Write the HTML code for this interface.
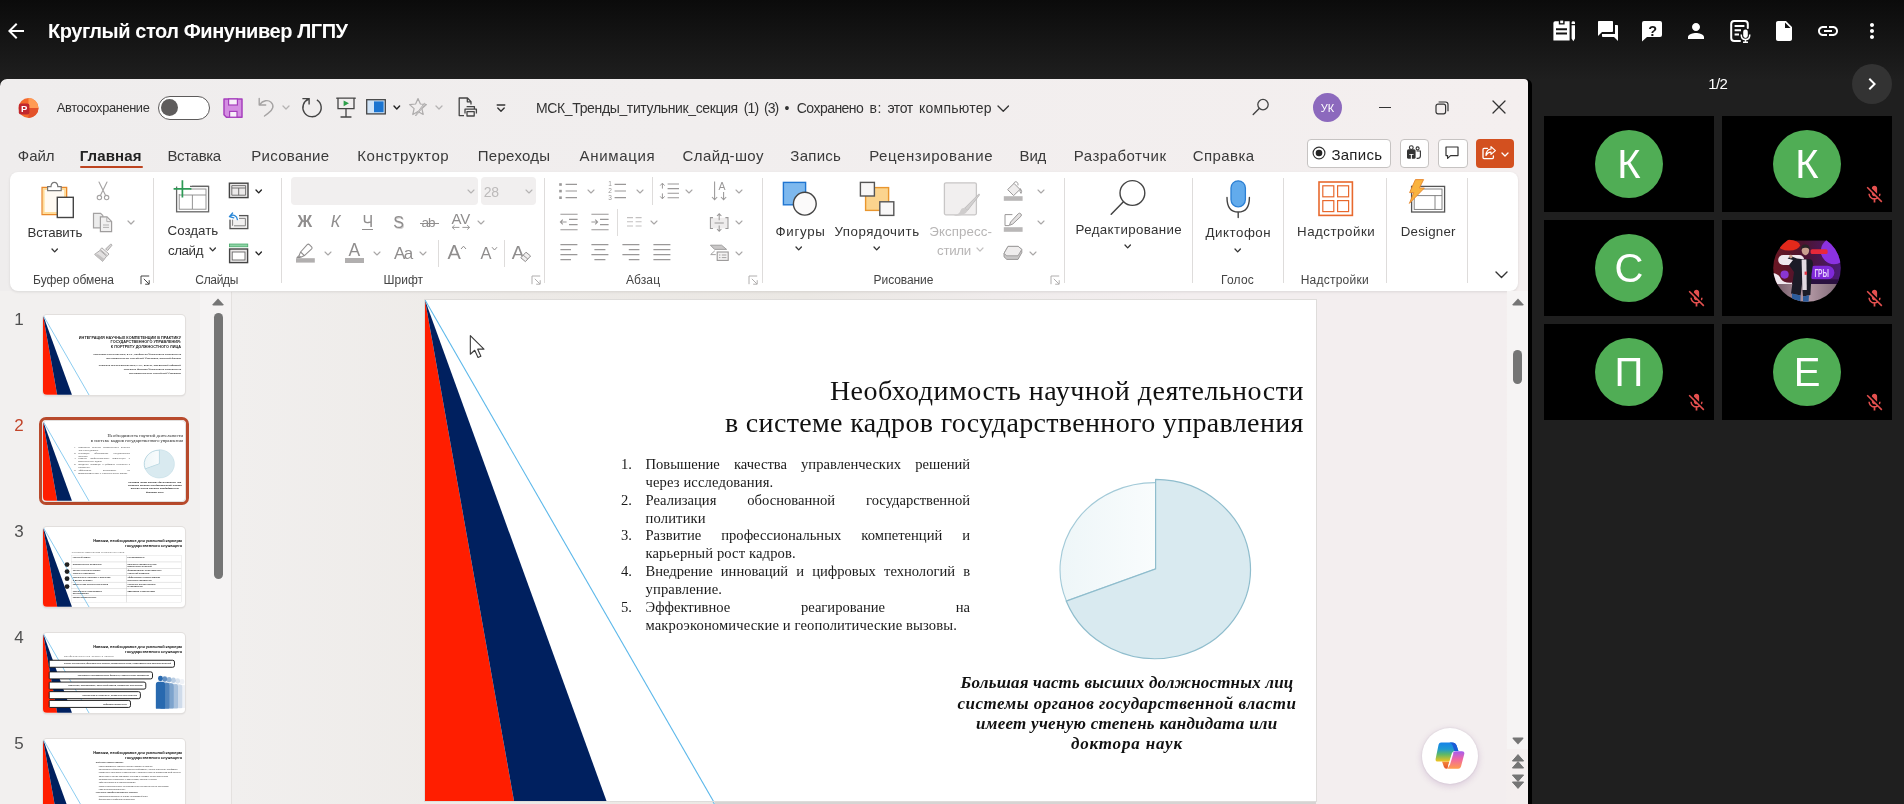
<!DOCTYPE html>
<html lang="ru"><head><meta charset="utf-8"><title>Круглый стол Финунивер ЛГПУ</title>
<style>
html,body{margin:0;padding:0}
body{width:1904px;height:804px;overflow:hidden;background:#1f1f1f;position:relative;font-family:"Liberation Sans",sans-serif}
#root{position:absolute;left:0;top:0;width:1904px;height:804px;will-change:transform}
.a{position:absolute}
.t{position:absolute;white-space:pre}
svg{position:absolute;overflow:visible}
</style></head><body><div id="root">
<div class="a" style="left:0;top:0;width:1904px;height:80px;background:linear-gradient(#0b0b0b,#1f1f1f)"></div>
<div class="a" style="left:0px;top:78.6px;width:1532px;height:726px;background:#000;border-radius:6px 6px 0 0;"></div>
<div class="a" style="left:0px;top:78.6px;width:1528px;height:726px;background:linear-gradient(90deg,#efeded 0,#f1eeee 45%,#f4efef 100%);border-radius:7px 4px 0 0;"></div>
<div class="a" style="left:232px;top:291px;width:1274px;height:513px;background:linear-gradient(90deg,#f1efee 0,#edeae7 22%,#ebe8e4 45%,#f0ecec 60%,#f3eeef 75%)"></div>
<div class="a" style="left:0px;top:291px;width:231px;height:513px;background:#f2f0ef;"></div>
<div class="a" style="left:200px;top:291px;width:31px;height:513px;background:#f5f3f3;"></div>
<div class="a" style="left:231px;top:292px;width:1px;height:512px;background:#e4e1df;"></div>
<div class="a" style="left:715px;top:801.3px;width:601px;height:2.7px;background:#d6d4d3;"></div>
<svg width="8" height="5" viewBox="0 0 8 5" style="left:710px;top:800.5px"><line x1="2.6" y1="0" x2="5.2" y2="4.5" stroke="#6fc0ec" stroke-width="1.1"/></svg>
<div class="a" style="left:424.8px;top:299.5px;width:891.2px;height:501px;background:#fff;box-shadow:0 0 0 1px #dedcda"></div><div class="a" style="left:425px;top:300px;width:891px;height:500.5px;overflow:hidden"><svg width="891" height="501" viewBox="0 0 891 501" style="left:0;top:0"><polygon points="0,0 0,501 89,501" fill="#ff1e00"/><polygon points="0,0 89,501 181.5,501" fill="#00205f"/><line x1="0" y1="0" x2="290" y2="504" stroke="#5cb8ea" stroke-width="1.1"/></svg><span class="t" style="left:404.90px;top:76.50px;font:28px/28px 'Liberation Serif',serif;color:#111;letter-spacing:0.489px;">Необходимость научной деятельности</span><span class="t" style="left:299.90px;top:108.50px;font:28px/28px 'Liberation Serif',serif;color:#111;letter-spacing:0.342px;">в системе кадров государственного управления</span><span class="t" style="left:196.00px;top:156.70px;font:14.6px/14.6px 'Liberation Serif',serif;color:#1a1a1a;">1.</span><div class="a" style="left:220.5px;top:156.70px;width:324.6px;font:14.6px/14.6px 'Liberation Serif',serif;color:#1a1a1a;text-align:justify;text-align-last:justify;white-space:normal">Повышение качества управленческих решений</div><span class="t" style="left:220.50px;top:174.70px;font:14.6px/14.6px 'Liberation Serif',serif;color:#1a1a1a;letter-spacing:0.125px;">через исследования.</span><span class="t" style="left:196.00px;top:192.70px;font:14.6px/14.6px 'Liberation Serif',serif;color:#1a1a1a;">2.</span><div class="a" style="left:220.5px;top:192.70px;width:324.6px;font:14.6px/14.6px 'Liberation Serif',serif;color:#1a1a1a;text-align:justify;text-align-last:justify;white-space:normal">Реализация обоснованной государственной</div><span class="t" style="left:220.50px;top:210.70px;font:14.6px/14.6px 'Liberation Serif',serif;color:#1a1a1a;letter-spacing:0.152px;">политики</span><span class="t" style="left:196.00px;top:227.70px;font:14.6px/14.6px 'Liberation Serif',serif;color:#1a1a1a;">3.</span><div class="a" style="left:220.5px;top:227.70px;width:324.6px;font:14.6px/14.6px 'Liberation Serif',serif;color:#1a1a1a;text-align:justify;text-align-last:justify;white-space:normal">Развитие профессиональных компетенций и</div><span class="t" style="left:220.50px;top:245.70px;font:14.6px/14.6px 'Liberation Serif',serif;color:#1a1a1a;letter-spacing:0.126px;">карьерный рост кадров.</span><span class="t" style="left:196.00px;top:263.70px;font:14.6px/14.6px 'Liberation Serif',serif;color:#1a1a1a;">4.</span><div class="a" style="left:220.5px;top:263.70px;width:324.6px;font:14.6px/14.6px 'Liberation Serif',serif;color:#1a1a1a;text-align:justify;text-align-last:justify;white-space:normal">Внедрение инноваций и цифровых технологий в</div><span class="t" style="left:220.50px;top:281.70px;font:14.6px/14.6px 'Liberation Serif',serif;color:#1a1a1a;letter-spacing:0.135px;">управление.</span><span class="t" style="left:196.00px;top:299.70px;font:14.6px/14.6px 'Liberation Serif',serif;color:#1a1a1a;">5.</span><div class="a" style="left:220.5px;top:299.70px;width:324.6px;font:14.6px/14.6px 'Liberation Serif',serif;color:#1a1a1a;text-align:justify;text-align-last:justify;white-space:normal">Эффективное реагирование на</div><span class="t" style="left:220.50px;top:317.70px;font:14.6px/14.6px 'Liberation Serif',serif;color:#1a1a1a;letter-spacing:0.128px;">макроэкономические и геополитические вызовы.</span><svg width="891" height="501" viewBox="0 0 891 501" style="left:0;top:0"><defs><linearGradient id="pg" x1="0" y1="0" x2="1" y2="0"><stop offset="0" stop-color="#eef6f8"/><stop offset="1" stop-color="#f9fcfd"/></linearGradient></defs><path d="M730.6,268.9 L641.4,301.0 A94.6,87 0 0 1 730.6,182.6 Z" fill="url(#pg)" stroke="#a3cad8" stroke-width="1.1" stroke-linejoin="round"/><path d="M730.6,179.4 A95.3,89.6 0 1 1 641.2,301.1 L730.6,268.9 Z" fill="#d9eaf0" stroke="#8fbdcd" stroke-width="1.2" stroke-linejoin="round"/></svg><span class="t" style="left:535.60px;top:374.00px;font:italic bold 17px/17px 'Liberation Serif',serif;color:#111;letter-spacing:0.183px;">Большая часть высших должностных лиц</span><span class="t" style="left:532.60px;top:395.00px;font:italic bold 17px/17px 'Liberation Serif',serif;color:#111;letter-spacing:0.471px;">системы органов государственной власти</span><span class="t" style="left:551.00px;top:415.00px;font:italic bold 17px/17px 'Liberation Serif',serif;color:#111;letter-spacing:0.276px;">имеет ученую степень кандидата или</span><span class="t" style="left:646.00px;top:435.00px;font:italic bold 17px/17px 'Liberation Serif',serif;color:#111;letter-spacing:0.823px;">доктора наук</span></div>
<span class="t" style="left:14.27px;top:311.00px;font:17px/17px 'Liberation Sans',sans-serif;color:#505050;">1</span>
<div class="a" style="left:43px;top:315px;width:142px;height:80px;background:#fff;overflow:hidden;border-radius:4px;box-shadow:0 0 0 1px #e2dfdd,0 1px 2px rgba(0,0,0,.15)"><div class="a" style="left:0;top:0;width:891px;height:501px;transform:scale(0.15937);transform-origin:0 0"><svg width="891" height="501" viewBox="0 0 891 501" style="left:0;top:0"><polygon points="0,0 0,501 89,501" fill="#ff1e00"/><polygon points="0,0 89,501 181.5,501" fill="#00205f"/><line x1="0" y1="0" x2="290" y2="504" stroke="#5cb8ea" stroke-width="4.5"/></svg><span class="t" style="left:225.07px;top:129.50px;font:bold 24px/24px 'Liberation Sans',sans-serif;color:#222;">ИНТЕГРАЦИЯ НАУЧНЫХ КОМПЕТЕНЦИЙ В ПРАКТИКУ</span><span class="t" style="left:423.96px;top:157.50px;font:bold 24px/24px 'Liberation Sans',sans-serif;color:#222;">ГОСУДАРСТВЕННОГО УПРАВЛЕНИЯ:</span><span class="t" style="left:425.47px;top:185.50px;font:bold 24px/24px 'Liberation Sans',sans-serif;color:#222;">К ПОРТРЕТУ ДОЛЖНОСТНОГО ЛИЦА</span><span class="t" style="left:315.97px;top:237.00px;font:bold 15px/15px 'Liberation Sans',sans-serif;color:#333;">Смыслова Ольга Юрьевна, д.э.н., профессор Финансового университета</span><span class="t" style="left:396.10px;top:263.00px;font:bold 15px/15px 'Liberation Sans',sans-serif;color:#333;">при Правительстве Российской Федерации, Липецкий филиал</span><span class="t" style="left:350.28px;top:309.00px;font:bold 15px/15px 'Liberation Sans',sans-serif;color:#333;">Корякина Татьяна Валерьевна, к.э.н., доцент, заведующий кафедрой</span><span class="t" style="left:506.85px;top:333.00px;font:bold 15px/15px 'Liberation Sans',sans-serif;color:#333;">Липецкого филиала Финансового университета</span><span class="t" style="left:539.89px;top:357.00px;font:bold 15px/15px 'Liberation Sans',sans-serif;color:#333;">при Правительстве Российской Федерации</span></div></div>
<span class="t" style="left:14.27px;top:417.00px;font:17px/17px 'Liberation Sans',sans-serif;color:#c2452a;">2</span>
<div class="a" style="left:39px;top:417px;width:144px;height:82px;border:3px solid #b84a2c;border-radius:7px;background:#fff"></div>
<div class="a" style="left:43px;top:421px;width:142px;height:80px;background:#fff;overflow:hidden;border-radius:4px;box-shadow:0 0 0 1px #e2dfdd,0 1px 2px rgba(0,0,0,.15)"><div class="a" style="left:0;top:0;width:891px;height:501px;transform:scale(0.15937);transform-origin:0 0"><svg width="891" height="501" viewBox="0 0 891 501" style="left:0;top:0"><polygon points="0,0 0,501 89,501" fill="#ff1e00"/><polygon points="0,0 89,501 181.5,501" fill="#00205f"/><line x1="0" y1="0" x2="290" y2="504" stroke="#5cb8ea" stroke-width="4.5"/></svg><span class="t" style="left:404.90px;top:76.50px;font:28px/28px 'Liberation Serif',serif;color:#111;letter-spacing:0.489px;">Необходимость научной деятельности</span><span class="t" style="left:299.90px;top:108.50px;font:28px/28px 'Liberation Serif',serif;color:#111;letter-spacing:0.342px;">в системе кадров государственного управления</span><span class="t" style="left:196.00px;top:156.70px;font:14.6px/14.6px 'Liberation Serif',serif;color:#1a1a1a;">1.</span><div class="a" style="left:220.5px;top:156.70px;width:324.6px;font:14.6px/14.6px 'Liberation Serif',serif;color:#1a1a1a;text-align:justify;text-align-last:justify;white-space:normal">Повышение качества управленческих решений</div><span class="t" style="left:220.50px;top:174.70px;font:14.6px/14.6px 'Liberation Serif',serif;color:#1a1a1a;letter-spacing:0.125px;">через исследования.</span><span class="t" style="left:196.00px;top:192.70px;font:14.6px/14.6px 'Liberation Serif',serif;color:#1a1a1a;">2.</span><div class="a" style="left:220.5px;top:192.70px;width:324.6px;font:14.6px/14.6px 'Liberation Serif',serif;color:#1a1a1a;text-align:justify;text-align-last:justify;white-space:normal">Реализация обоснованной государственной</div><span class="t" style="left:220.50px;top:210.70px;font:14.6px/14.6px 'Liberation Serif',serif;color:#1a1a1a;letter-spacing:0.152px;">политики</span><span class="t" style="left:196.00px;top:227.70px;font:14.6px/14.6px 'Liberation Serif',serif;color:#1a1a1a;">3.</span><div class="a" style="left:220.5px;top:227.70px;width:324.6px;font:14.6px/14.6px 'Liberation Serif',serif;color:#1a1a1a;text-align:justify;text-align-last:justify;white-space:normal">Развитие профессиональных компетенций и</div><span class="t" style="left:220.50px;top:245.70px;font:14.6px/14.6px 'Liberation Serif',serif;color:#1a1a1a;letter-spacing:0.126px;">карьерный рост кадров.</span><span class="t" style="left:196.00px;top:263.70px;font:14.6px/14.6px 'Liberation Serif',serif;color:#1a1a1a;">4.</span><div class="a" style="left:220.5px;top:263.70px;width:324.6px;font:14.6px/14.6px 'Liberation Serif',serif;color:#1a1a1a;text-align:justify;text-align-last:justify;white-space:normal">Внедрение инноваций и цифровых технологий в</div><span class="t" style="left:220.50px;top:281.70px;font:14.6px/14.6px 'Liberation Serif',serif;color:#1a1a1a;letter-spacing:0.135px;">управление.</span><span class="t" style="left:196.00px;top:299.70px;font:14.6px/14.6px 'Liberation Serif',serif;color:#1a1a1a;">5.</span><div class="a" style="left:220.5px;top:299.70px;width:324.6px;font:14.6px/14.6px 'Liberation Serif',serif;color:#1a1a1a;text-align:justify;text-align-last:justify;white-space:normal">Эффективное реагирование на</div><span class="t" style="left:220.50px;top:317.70px;font:14.6px/14.6px 'Liberation Serif',serif;color:#1a1a1a;letter-spacing:0.128px;">макроэкономические и геополитические вызовы.</span><svg width="891" height="501" viewBox="0 0 891 501" style="left:0;top:0"><defs><linearGradient id="pg" x1="0" y1="0" x2="1" y2="0"><stop offset="0" stop-color="#eef6f8"/><stop offset="1" stop-color="#f9fcfd"/></linearGradient></defs><path d="M730.6,268.9 L641.4,301.0 A94.6,87 0 0 1 730.6,182.6 Z" fill="url(#pg)" stroke="#a3cad8" stroke-width="4.5" stroke-linejoin="round"/><path d="M730.6,179.4 A95.3,89.6 0 1 1 641.2,301.1 L730.6,268.9 Z" fill="#d9eaf0" stroke="#8fbdcd" stroke-width="1.2" stroke-linejoin="round"/></svg><span class="t" style="left:535.60px;top:374.00px;font:italic bold 17px/17px 'Liberation Serif',serif;color:#111;letter-spacing:0.183px;">Большая часть высших должностных лиц</span><span class="t" style="left:532.60px;top:395.00px;font:italic bold 17px/17px 'Liberation Serif',serif;color:#111;letter-spacing:0.471px;">системы органов государственной власти</span><span class="t" style="left:551.00px;top:415.00px;font:italic bold 17px/17px 'Liberation Serif',serif;color:#111;letter-spacing:0.276px;">имеет ученую степень кандидата или</span><span class="t" style="left:646.00px;top:435.00px;font:italic bold 17px/17px 'Liberation Serif',serif;color:#111;letter-spacing:0.823px;">доктора наук</span></div></div>
<span class="t" style="left:14.27px;top:523.00px;font:17px/17px 'Liberation Sans',sans-serif;color:#505050;">3</span>
<div class="a" style="left:43px;top:527px;width:142px;height:80px;background:#fff;overflow:hidden;border-radius:4px;box-shadow:0 0 0 1px #e2dfdd,0 1px 2px rgba(0,0,0,.15)"><div class="a" style="left:0;top:0;width:891px;height:501px;transform:scale(0.15937);transform-origin:0 0"><svg width="891" height="501" viewBox="0 0 891 501" style="left:0;top:0"><polygon points="0,0 0,501 89,501" fill="#ff1e00"/><polygon points="0,0 89,501 181.5,501" fill="#00205f"/><line x1="0" y1="0" x2="290" y2="504" stroke="#5cb8ea" stroke-width="4.5"/></svg><span class="t" style="left:315.00px;top:72.50px;font:bold 25px/25px 'Liberation Sans',sans-serif;color:#111;letter-spacing:-0.571px;">Навыки, необходимые для успешной карьеры</span><span class="t" style="left:515.00px;top:102.50px;font:bold 25px/25px 'Liberation Sans',sans-serif;color:#111;letter-spacing:-0.323px;">государственного служащего</span><span class="t" style="left:180.00px;top:154.00px;font:14px/14px 'Liberation Sans',sans-serif;color:#444;letter-spacing:1.227px;">Ключевые компетенции должностного лица</span><div class="a" style="left:178px;top:177px;width:689px;height:43px;border:1.5px solid #aaa;box-sizing:border-box"></div><div class="a" style="left:521px;top:177px;width:1.5px;height:43px;background:#aaa"></div><span class="t" style="left:186px;top:182px;font:bold 14px/16px 'Liberation Sans',sans-serif;color:#333">Научный навык</span><span class="t" style="left:530px;top:182px;font:bold 14px/16px 'Liberation Sans',sans-serif;color:#333">Необходимость</span><div class="a" style="left:178px;top:219px;width:689px;height:43px;border:1.5px solid #aaa;box-sizing:border-box"></div><div class="a" style="left:521px;top:219px;width:1.5px;height:43px;background:#aaa"></div><span class="t" style="left:186px;top:224px;font:bold 14px/16px 'Liberation Sans',sans-serif;color:#333">аналитическое мышление</span><span class="t" style="left:530px;top:224px;font:bold 14px/16px 'Liberation Sans',sans-serif;color:#333">принятие управленческих<br>взвешенных решений</span><div class="a" style="left:178px;top:261px;width:689px;height:43px;border:1.5px solid #aaa;box-sizing:border-box"></div><div class="a" style="left:521px;top:261px;width:1.5px;height:43px;background:#aaa"></div><span class="t" style="left:186px;top:266px;font:bold 14px/16px 'Liberation Sans',sans-serif;color:#333">умение системно решать<br>сложные проблемы</span><span class="t" style="left:530px;top:266px;font:bold 14px/16px 'Liberation Sans',sans-serif;color:#333">формирование обоснованных<br>стратегий развития</span><div class="a" style="left:178px;top:303px;width:689px;height:43px;border:1.5px solid #aaa;box-sizing:border-box"></div><div class="a" style="left:521px;top:303px;width:1.5px;height:43px;background:#aaa"></div><span class="t" style="left:186px;top:308px;font:bold 14px/16px 'Liberation Sans',sans-serif;color:#333">способность работать с данными<br>и делать выводы</span><span class="t" style="left:530px;top:308px;font:bold 14px/16px 'Liberation Sans',sans-serif;color:#333">эффективное использование<br>ресурсов управления</span><div class="a" style="left:178px;top:345px;width:689px;height:43px;border:1.5px solid #aaa;box-sizing:border-box"></div><div class="a" style="left:521px;top:345px;width:1.5px;height:43px;background:#aaa"></div><span class="t" style="left:186px;top:350px;font:bold 14px/16px 'Liberation Sans',sans-serif;color:#333">критическая оценка источников</span><span class="t" style="left:530px;top:350px;font:bold 14px/16px 'Liberation Sans',sans-serif;color:#333">снижение рисков ошибок<br>в управлении</span><div class="a" style="left:178px;top:387px;width:689px;height:43px;border:1.5px solid #aaa;box-sizing:border-box"></div><div class="a" style="left:521px;top:387px;width:1.5px;height:43px;background:#aaa"></div><span class="t" style="left:186px;top:392px;font:bold 14px/16px 'Liberation Sans',sans-serif;color:#333">способность планировать<br>исследования</span><span class="t" style="left:530px;top:392px;font:bold 14px/16px 'Liberation Sans',sans-serif;color:#333">адаптация к изменениям</span><div class="a" style="left:178px;top:429px;width:689px;height:43px;border:1.5px solid #aaa;box-sizing:border-box"></div><div class="a" style="left:521px;top:429px;width:1.5px;height:43px;background:#aaa"></div><span class="t" style="left:186px;top:434px;font:bold 14px/16px 'Liberation Sans',sans-serif;color:#333">коммуникабельность</span><span class="t" style="left:530px;top:434px;font:bold 14px/16px 'Liberation Sans',sans-serif;color:#333"></span><div class="a" style="left:136px;top:221px;width:30px;height:30px;border-radius:15px;background:#222"></div><div class="a" style="left:136px;top:265px;width:30px;height:30px;border-radius:15px;background:#222"></div><div class="a" style="left:136px;top:309px;width:30px;height:30px;border-radius:15px;background:#222"></div><div class="a" style="left:136px;top:359px;width:30px;height:30px;border-radius:15px;background:#222"></div></div></div>
<span class="t" style="left:14.27px;top:629.00px;font:17px/17px 'Liberation Sans',sans-serif;color:#505050;">4</span>
<div class="a" style="left:43px;top:633px;width:142px;height:80px;background:#fff;overflow:hidden;border-radius:4px;box-shadow:0 0 0 1px #e2dfdd,0 1px 2px rgba(0,0,0,.15)"><div class="a" style="left:0;top:0;width:891px;height:501px;transform:scale(0.15937);transform-origin:0 0"><svg width="891" height="501" viewBox="0 0 891 501" style="left:0;top:0"><polygon points="0,0 0,501 89,501" fill="#ff1e00"/><polygon points="0,0 89,501 181.5,501" fill="#00205f"/><line x1="0" y1="0" x2="290" y2="504" stroke="#5cb8ea" stroke-width="4.5"/></svg><span class="t" style="left:315.00px;top:72.50px;font:bold 25px/25px 'Liberation Sans',sans-serif;color:#111;letter-spacing:-0.571px;">Навыки, необходимые для успешной карьеры</span><span class="t" style="left:515.00px;top:102.50px;font:bold 25px/25px 'Liberation Sans',sans-serif;color:#111;letter-spacing:-0.323px;">государственного служащего</span><span class="t" style="left:132.00px;top:141.00px;font:14px/14px 'Liberation Sans',sans-serif;color:#444;letter-spacing:2.173px;">Профессиональные знания и навыки</span><div class="a" style="left:36px;top:168px;width:792px;height:50px;border:6px solid #1a1a1a;border-radius:8px 14px 14px 8px;background:#fff;box-sizing:border-box"></div><span class="t" style="right:87px;top:185px;font:bold 13px/16px 'Liberation Sans',sans-serif;color:#333">Знание Конституции, федеральных законов, нормативных актов, необходимых для принятия решений</span><div class="a" style="left:36px;top:241px;width:654px;height:50px;border:6px solid #1a1a1a;border-radius:8px 14px 14px 8px;background:#fff;box-sizing:border-box"></div><span class="t" style="right:225px;top:258px;font:bold 13px/16px 'Liberation Sans',sans-serif;color:#333">Экономика и государственные финансы, стратегическое управление</span><div class="a" style="left:36px;top:305px;width:612px;height:50px;border:6px solid #1a1a1a;border-radius:8px 14px 14px 8px;background:#fff;box-sizing:border-box"></div><span class="t" style="right:267px;top:322px;font:bold 13px/16px 'Liberation Sans',sans-serif;color:#333">Лидерство, планирование, проектный подход, управление персоналом</span><div class="a" style="left:36px;top:365px;width:578px;height:50px;border:6px solid #1a1a1a;border-radius:8px 14px 14px 8px;background:#fff;box-sizing:border-box"></div><span class="t" style="right:301px;top:382px;font:bold 13px/16px 'Liberation Sans',sans-serif;color:#333">Письменная и устная речь, публичные выступления</span><div class="a" style="left:36px;top:420px;width:516px;height:50px;border:6px solid #1a1a1a;border-radius:8px 14px 14px 8px;background:#fff;box-sizing:border-box"></div><span class="t" style="right:363px;top:437px;font:bold 13px/16px 'Liberation Sans',sans-serif;color:#333">Цифровая грамотность</span><div class="a" style="left:857px;top:288px;width:30px;height:34px;border-radius:15px;background:rgba(190,205,225,0.25)"></div><div class="a" style="left:843px;top:326px;width:58px;height:145px;background:rgba(190,205,225,0.25);border-radius:18px 18px 6px 6px"></div><div class="a" style="left:830px;top:284px;width:30px;height:34px;border-radius:15px;background:rgba(160,185,215,0.40)"></div><div class="a" style="left:816px;top:322px;width:58px;height:150px;background:rgba(160,185,215,0.40);border-radius:18px 18px 6px 6px"></div><div class="a" style="left:803px;top:280px;width:30px;height:34px;border-radius:15px;background:rgba(130,165,205,0.55)"></div><div class="a" style="left:789px;top:318px;width:58px;height:155px;background:rgba(130,165,205,0.55);border-radius:18px 18px 6px 6px"></div><div class="a" style="left:776px;top:276px;width:30px;height:34px;border-radius:15px;background:rgba(100,145,195,0.70)"></div><div class="a" style="left:762px;top:314px;width:58px;height:160px;background:rgba(100,145,195,0.70);border-radius:18px 18px 6px 6px"></div><div class="a" style="left:749px;top:272px;width:30px;height:34px;border-radius:15px;background:rgba(70,125,185,0.85)"></div><div class="a" style="left:735px;top:310px;width:58px;height:165px;background:rgba(70,125,185,0.85);border-radius:18px 18px 6px 6px"></div><div class="a" style="left:722px;top:268px;width:30px;height:34px;border-radius:15px;background:rgba(40,105,175,1.00)"></div><div class="a" style="left:708px;top:306px;width:58px;height:170px;background:rgba(40,105,175,1.00);border-radius:18px 18px 6px 6px"></div></div></div>
<span class="t" style="left:14.27px;top:735.00px;font:17px/17px 'Liberation Sans',sans-serif;color:#505050;">5</span>
<div class="a" style="left:43px;top:739px;width:142px;height:80px;background:#fff;overflow:hidden;border-radius:4px;box-shadow:0 0 0 1px #e2dfdd,0 1px 2px rgba(0,0,0,.15)"><div class="a" style="left:0;top:0;width:891px;height:501px;transform:scale(0.15937);transform-origin:0 0"><svg width="891" height="501" viewBox="0 0 891 501" style="left:0;top:0"><polygon points="0,0 0,501 89,501" fill="#ff1e00"/><polygon points="0,0 89,501 181.5,501" fill="#00205f"/><line x1="0" y1="0" x2="290" y2="504" stroke="#5cb8ea" stroke-width="4.5"/></svg><span class="t" style="left:315.00px;top:72.50px;font:bold 25px/25px 'Liberation Sans',sans-serif;color:#111;letter-spacing:-0.571px;">Навыки, необходимые для успешной карьеры</span><span class="t" style="left:515.00px;top:102.50px;font:bold 25px/25px 'Liberation Sans',sans-serif;color:#111;letter-spacing:-0.323px;">государственного служащего</span><span class="t" style="left:331px;top:140px;font:bold 13px/15px 'Liberation Sans',sans-serif;color:#333">Soft Skills (гибкие навыки):</span><span class="t" style="left:350px;top:161px;font:13px/15px 'Liberation Sans',sans-serif;color:#333">коммуникативные навыки и умение работать в команде</span><span class="t" style="left:350px;top:182px;font:13px/15px 'Liberation Sans',sans-serif;color:#333">эмоциональный интеллект и стрессоустойчивость, умение разрешать конфликты</span><span class="t" style="left:350px;top:203px;font:13px/15px 'Liberation Sans',sans-serif;color:#333">критическое мышление и способность к самообучению на протяжении всей карьеры</span><span class="t" style="left:350px;top:224px;font:13px/15px 'Liberation Sans',sans-serif;color:#333">лидерство и умение принимать решения в условиях неопределенности</span><span class="t" style="left:350px;top:245px;font:13px/15px 'Liberation Sans',sans-serif;color:#333">адаптивность и готовность к изменениям, гибкость в работе</span><span class="t" style="left:350px;top:266px;font:13px/15px 'Liberation Sans',sans-serif;color:#333">тайм-менеджмент и самоорганизация</span><span class="t" style="left:350px;top:287px;font:13px/15px 'Liberation Sans',sans-serif;color:#333">этика и ответственность государственного служащего перед обществом</span><span class="t" style="left:350px;top:308px;font:13px/15px 'Liberation Sans',sans-serif;color:#333">клиентоориентированность</span><span class="t" style="left:331px;top:329px;font:bold 13px/15px 'Liberation Sans',sans-serif;color:#333">Hard Skills (профессиональные навыки):</span><span class="t" style="left:350px;top:350px;font:13px/15px 'Liberation Sans',sans-serif;color:#333">правовая грамотность и знание нормативной базы</span><span class="t" style="left:350px;top:371px;font:13px/15px 'Liberation Sans',sans-serif;color:#333">финансовая и цифровая грамотность</span></div></div>
<div class="a" style="left:213.5px;top:313px;width:9px;height:266px;background:#757575;border-radius:5px;"></div>
<svg width="12" height="8" viewBox="0 0 12 8" style="left:212px;top:298px"><path d="M6,0.5 L11.3,6.2 Q11.8,7.5 10.6,7.5 L1.4,7.5 Q0.2,7.5 0.7,6.2 Z" fill="#757575"/></svg>
<span class="t" style="left:1708.15px;top:76.00px;font:15px/15px 'Liberation Sans',sans-serif;color:#fff;letter-spacing:-0.576px;">1/2</span>
<div class="a" style="left:1852px;top:64px;width:40px;height:40px;border-radius:20px;background:#333"></div>
<svg width="24" height="24" viewBox="0 0 24 24" style="left:1860.0px;top:72.0px"><path d="M10 6L8.59 7.41 13.17 12l-4.58 4.59L10 18l6-6z" fill="#fff"/></svg>
<div class="a" style="left:1544px;top:116px;width:170px;height:96px;background:#000;"></div>
<div class="a" style="left:1595px;top:130px;width:68px;height:68px;border-radius:34px;background:#50ad55"></div>
<span class="t" style="left:1617.35px;top:144.00px;font:40px/40px 'Liberation Sans',sans-serif;color:#fff;">К</span>
<div class="a" style="left:1722px;top:116px;width:170px;height:96px;background:#000;"></div>
<div class="a" style="left:1773px;top:130px;width:68px;height:68px;border-radius:34px;background:#50ad55"></div>
<span class="t" style="left:1795.35px;top:144.00px;font:40px/40px 'Liberation Sans',sans-serif;color:#fff;">К</span>
<svg width="21" height="21" viewBox="0 0 24 24" style="left:1863.5px;top:183.5px"><path d="M19 11h-1.7c0 .74-.16 1.43-.43 2.05l1.23 1.23c.56-.98.9-2.09.9-3.28zm-4.02.17c0-.06.02-.11.02-.17V5c0-1.66-1.34-3-3-3S9 3.34 9 5v.18l5.98 5.99zM4.27 3L3 4.27l6.01 6.01V11c0 1.66 1.33 3 2.99 3 .22 0 .44-.03.65-.08l1.66 1.66c-.71.33-1.5.52-2.31.52-2.76 0-5.3-2.1-5.3-5.1H5c0 3.41 2.72 6.23 6 6.72V21h2v-3.28c.91-.13 1.77-.45 2.54-.9L19.73 21 21 19.73 4.27 3z" fill="#e5504f"/></svg>
<div class="a" style="left:1544px;top:220px;width:170px;height:96px;background:#000;"></div>
<div class="a" style="left:1595px;top:234px;width:68px;height:68px;border-radius:34px;background:#50ad55"></div>
<span class="t" style="left:1614.56px;top:248.00px;font:40px/40px 'Liberation Sans',sans-serif;color:#fff;">С</span>
<svg width="21" height="21" viewBox="0 0 24 24" style="left:1685.5px;top:287.5px"><path d="M19 11h-1.7c0 .74-.16 1.43-.43 2.05l1.23 1.23c.56-.98.9-2.09.9-3.28zm-4.02.17c0-.06.02-.11.02-.17V5c0-1.66-1.34-3-3-3S9 3.34 9 5v.18l5.98 5.99zM4.27 3L3 4.27l6.01 6.01V11c0 1.66 1.33 3 2.99 3 .22 0 .44-.03.65-.08l1.66 1.66c-.71.33-1.5.52-2.31.52-2.76 0-5.3-2.1-5.3-5.1H5c0 3.41 2.72 6.23 6 6.72V21h2v-3.28c.91-.13 1.77-.45 2.54-.9L19.73 21 21 19.73 4.27 3z" fill="#e5504f"/></svg>
<div class="a" style="left:1722px;top:220px;width:170px;height:96px;background:#000;"></div>
<svg width="68" height="68" viewBox="0 0 68 68" style="left:1773px;top:234.3px"><defs><clipPath id="avc"><circle cx="34" cy="34" r="33.8"/></clipPath><linearGradient id="avb" x1="0" y1="0" x2="1" y2="0"><stop offset="0" stop-color="#6a1622"/><stop offset="0.45" stop-color="#4c1430"/><stop offset="1" stop-color="#4a1a78"/></linearGradient><linearGradient id="avf" x1="0" y1="0" x2="1" y2="0"><stop offset="0" stop-color="#6e5562"/><stop offset="0.5" stop-color="#b59aa6"/><stop offset="1" stop-color="#7a6472"/></linearGradient></defs><g clip-path="url(#avc)"><rect width="68" height="68" fill="#000"/><rect y="6.6" width="68" height="44" fill="url(#avb)"/><ellipse cx="16" cy="11.2" rx="11" ry="5.4" fill="#e3291b"/><circle cx="61" cy="17" r="13.2" fill="#8b32e2"/><rect x="5.2" y="21" width="26" height="10" rx="5" fill="#efe7ee"/><path d="M0 39 Q6 40 8 45 Q10 49 19 48.6 V50 H0 Z" fill="#efe7ee"/><circle cx="11.6" cy="40.6" r="4.1" fill="#8a36d2"/><rect x="35" y="31.8" width="26.4" height="13.8" rx="6.9" fill="#7f29d8"/><rect x="37.6" y="15.2" width="17" height="4.9" rx="1.6" fill="#e8283a"/><rect x="30" y="45.4" width="38" height="4.6" fill="#2a1040"/><rect y="50" width="68" height="18" fill="url(#avf)"/><path d="M20 26 L14.6 24.6 L17.6 22 L24 24.4 L28 25 L37 25.2 Q40 26 40 30 L38.6 40 L37.4 61 L30 62.6 L29 50 L27.6 61.6 L18 59.6 L21 38 L16 31 Z" fill="#1b1b27"/><path d="M28.6 25.4 H33.4 L33.8 56 H29.4 Z" fill="#e2dae2"/><rect x="31.6" y="37.6" width="2.4" height="3.2" fill="#e03444"/><path d="M19 59.4 L27.6 61.4 L27.4 68 H19 Z M30 62.4 L36 61.2 L35.6 68 H30 Z" fill="#2c5c9c"/><ellipse cx="32.4" cy="16.6" rx="3.7" ry="4.6" fill="#c9a08f"/><path d="M28 15.6 Q27.6 10.2 32.6 10.4 Q37.4 10.6 36.8 16 Q35.4 13.4 32.4 13.8 Q29.4 13.6 28 15.6 Z" fill="#2a2226"/><circle cx="17.8" cy="22.6" r="1.8" fill="#c9a08f"/><text x="41.4" y="43.2" font-family="Liberation Sans, sans-serif" font-weight="bold" font-size="11.5" textLength="14.5" lengthAdjust="spacingAndGlyphs" fill="#e6cfff">ГРЫ</text></g></svg>
<svg width="21" height="21" viewBox="0 0 24 24" style="left:1863.5px;top:287.5px"><path d="M19 11h-1.7c0 .74-.16 1.43-.43 2.05l1.23 1.23c.56-.98.9-2.09.9-3.28zm-4.02.17c0-.06.02-.11.02-.17V5c0-1.66-1.34-3-3-3S9 3.34 9 5v.18l5.98 5.99zM4.27 3L3 4.27l6.01 6.01V11c0 1.66 1.33 3 2.99 3 .22 0 .44-.03.65-.08l1.66 1.66c-.71.33-1.5.52-2.31.52-2.76 0-5.3-2.1-5.3-5.1H5c0 3.41 2.72 6.23 6 6.72V21h2v-3.28c.91-.13 1.77-.45 2.54-.9L19.73 21 21 19.73 4.27 3z" fill="#e5504f"/></svg>
<div class="a" style="left:1544px;top:324px;width:170px;height:96px;background:#000;"></div>
<div class="a" style="left:1595px;top:338px;width:68px;height:68px;border-radius:34px;background:#50ad55"></div>
<span class="t" style="left:1614.62px;top:352.00px;font:40px/40px 'Liberation Sans',sans-serif;color:#fff;">П</span>
<svg width="21" height="21" viewBox="0 0 24 24" style="left:1685.5px;top:391.5px"><path d="M19 11h-1.7c0 .74-.16 1.43-.43 2.05l1.23 1.23c.56-.98.9-2.09.9-3.28zm-4.02.17c0-.06.02-.11.02-.17V5c0-1.66-1.34-3-3-3S9 3.34 9 5v.18l5.98 5.99zM4.27 3L3 4.27l6.01 6.01V11c0 1.66 1.33 3 2.99 3 .22 0 .44-.03.65-.08l1.66 1.66c-.71.33-1.5.52-2.31.52-2.76 0-5.3-2.1-5.3-5.1H5c0 3.41 2.72 6.23 6 6.72V21h2v-3.28c.91-.13 1.77-.45 2.54-.9L19.73 21 21 19.73 4.27 3z" fill="#e5504f"/></svg>
<div class="a" style="left:1722px;top:324px;width:170px;height:96px;background:#000;"></div>
<div class="a" style="left:1773px;top:338px;width:68px;height:68px;border-radius:34px;background:#50ad55"></div>
<span class="t" style="left:1793.66px;top:352.00px;font:40px/40px 'Liberation Sans',sans-serif;color:#fff;">Е</span>
<svg width="21" height="21" viewBox="0 0 24 24" style="left:1863.5px;top:391.5px"><path d="M19 11h-1.7c0 .74-.16 1.43-.43 2.05l1.23 1.23c.56-.98.9-2.09.9-3.28zm-4.02.17c0-.06.02-.11.02-.17V5c0-1.66-1.34-3-3-3S9 3.34 9 5v.18l5.98 5.99zM4.27 3L3 4.27l6.01 6.01V11c0 1.66 1.33 3 2.99 3 .22 0 .44-.03.65-.08l1.66 1.66c-.71.33-1.5.52-2.31.52-2.76 0-5.3-2.1-5.3-5.1H5c0 3.41 2.72 6.23 6 6.72V21h2v-3.28c.91-.13 1.77-.45 2.54-.9L19.73 21 21 19.73 4.27 3z" fill="#e5504f"/></svg>
<svg width="24" height="24" viewBox="0 0 24 24" style="left:4.0px;top:19.0px"><path d="M20 11H7.83l5.59-5.59L12 4l-8 8 8 8 1.41-1.41L7.83 13H20v-2z" fill="#fff"/></svg>
<span class="t" style="left:48.00px;top:21.00px;font:bold 20px/20px 'Liberation Sans',sans-serif;color:#fff;letter-spacing:-0.440px;">Круглый стол Финунивер ЛГПУ</span>
<svg width="24" height="24" viewBox="0 0 24 24" style="left:1552px;top:19px"><path fill="#fff" fill-rule="evenodd" d="M3.2 2.2 H17.6 V21.6 H1.4 V4 Q1.4 2.2 3.2 2.2 Z M6.8 2.2 V5.4 H12.6 V2.2 Z M4 9.2 V11.2 H15 V9.2 Z M4 13.6 V15.6 H15 V13.6 Z"/><rect x="8.2" y="1.6" width="3" height="2.6" fill="#fff"/><path fill="#fff" d="M19.6 6.2 H23 V19.5 L21.3 22.3 L19.6 19.5 Z M19.6 3.4 Q19.6 2.2 21.3 2.2 Q23 2.2 23 3.4 V5 H19.6 Z"/></svg>
<svg width="24" height="24" viewBox="0 0 24 24" style="left:1596.0px;top:19.0px"><path d="M21 6h-2v9H6v2c0 .55.45 1 1 1h11l4 4V7c0-.55-.45-1-1-1zm-4 6V3c0-.55-.45-1-1-1H3c-.55 0-1 .45-1 1v14l4-4h10c.55 0 1-.45 1-1z" fill="#fff"/></svg>
<svg width="24" height="24" viewBox="0 0 24 24" style="left:1640px;top:19px"><path fill="#fff" d="M4 2 H20 Q22 2 22 4 V16 Q22 18 20 18 H7 L2 22.5 V4 Q2 2 4 2 Z"/></svg>
<span class="t" style="left:1648.17px;top:23.75px;font:bold 14.5px/14.5px 'Liberation Sans',sans-serif;color:#151515;">?</span>
<svg width="24" height="24" viewBox="0 0 24 24" style="left:1684.0px;top:19.0px"><path d="M12 12c2.21 0 4-1.79 4-4s-1.79-4-4-4-4 1.79-4 4 1.79 4 4 4zm0 2c-2.67 0-8 1.34-8 4v2h16v-2c0-2.66-5.33-4-8-4z" fill="#fff"/></svg>
<svg width="24" height="24" viewBox="0 0 24 24" style="left:1729px;top:19px"><path fill="none" stroke="#fff" stroke-width="2" stroke-linecap="round" d="M11 22 H5.2 Q2.2 22 2.2 19 V5 Q2.2 2 5.2 2 H15.8 Q18.8 2 18.8 5 V9"/><path fill="#fff" d="M5.6 6 H15.4 V8 H5.6 Z M5.6 10.2 H12 V12.2 H5.6 Z M5.6 14.4 H10 V16.4 H5.6 Z"/><rect x="14.2" y="10.5" width="4.6" height="8.4" rx="2.3" fill="#fff"/><path fill="none" stroke="#fff" stroke-width="1.5" d="M12.2 15.5 Q12.2 20.6 16.5 20.6 Q20.8 20.6 20.8 15.5 M16.5 20.6 V23 M14 23.2 H19"/></svg>
<svg width="24" height="24" viewBox="0 0 24 24" style="left:1772.0px;top:19.0px"><path d="M6 2c-1.1 0-1.99.9-1.99 2L4 20c0 1.1.89 2 1.99 2H18c1.1 0 2-.9 2-2V8l-6-6H6zm7 7V3.5L18.5 9H13z" fill="#fff"/></svg>
<svg width="24" height="24" viewBox="0 0 24 24" style="left:1816.0px;top:19.0px"><path d="M3.9 12c0-1.71 1.39-3.1 3.1-3.1h4V7H7c-2.76 0-5 2.24-5 5s2.24 5 5 5h4v-1.9H7c-1.71 0-3.1-1.39-3.1-3.1zM8 13h8v-2H8v2zm9-6h-4v1.9h4c1.71 0 3.1 1.39 3.1 3.1s-1.39 3.1-3.1 3.1h-4V17h4c2.76 0 5-2.24 5-5s-2.24-5-5-5z" fill="#fff"/></svg>
<svg width="24" height="24" viewBox="0 0 24 24" style="left:1860.0px;top:19.0px"><path d="M12 8c1.1 0 2-.9 2-2s-.9-2-2-2-2 .9-2 2 .9 2 2 2zm0 2c-1.1 0-2 .9-2 2s.9 2 2 2 2-.9 2-2-.9-2-2-2zm0 6c-1.1 0-2 .9-2 2s.9 2 2 2 2-.9 2-2-.9-2-2-2z" fill="#fff"/></svg>
<svg width="22" height="22" viewBox="0 0 22 22" style="left:17px;top:96.5px"><defs><linearGradient id="lg1" x1="0" y1="0" x2="1" y2="1"><stop offset="0" stop-color="#ff8f6b"/><stop offset="1" stop-color="#e8552d"/></linearGradient></defs><circle cx="11.5" cy="11" r="10" fill="#f4692c"/><path d="M11.5 1 A10 10 0 0 1 21.5 11 H11.5 Z" fill="#ff9b54"/><path d="M21.5 11 A10 10 0 0 1 11.5 21 V11 Z" fill="#e3522a"/><rect x="1.8" y="6.4" width="10.6" height="11" rx="2.2" fill="#c1272d"/></svg>
<span class="t" style="left:21.03px;top:103.75px;font:bold 9.5px/9.5px 'Liberation Sans',sans-serif;color:#fff;">P</span>
<span class="t" style="left:56.80px;top:102.10px;font:12.8px/12.8px 'Liberation Sans',sans-serif;color:#333;letter-spacing:-0.352px;">Автосохранение</span>
<div class="a" style="left:157.5px;top:96px;width:50px;height:22px;border-radius:12px;border:1px solid #5d5b5b;background:#fff"></div>
<div class="a" style="left:161px;top:99.3px;width:17px;height:17px;border-radius:9px;background:#5f5d5d"></div>
<svg width="20" height="20" viewBox="0 0 20 20" style="left:223px;top:97.5px"><path d="M1 1 H19 V19.2 H3.4 L1 16.8 Z" fill="#d48ee2" stroke="#a640bd" stroke-width="1.5" stroke-linejoin="round"/><rect x="5.6" y="1" width="8.8" height="6" fill="#f7eff9" stroke="#a640bd" stroke-width="1.2"/><rect x="6.6" y="13.4" width="7.4" height="5.8" fill="#f7eff9" stroke="#a640bd" stroke-width="1.2"/></svg>
<svg width="20" height="20" viewBox="0 0 20 20" style="left:257px;top:97px"><path d="M2.2 1.5 V8 H8.7 M2.6 7.6 C6 3.2 11 2.6 14 5.2 C17.6 8.4 16 13 11 16.4 L7.5 19" fill="none" stroke="#a5a3a3" stroke-width="1.4" stroke-linecap="round" stroke-linejoin="round"/></svg>
<svg width="8" height="5" viewBox="0 0 8 5" style="left:282.00px;top:104.50px"><path d="M1 1 L4.0 4 L7 1" fill="none" stroke="#b5b3b3" stroke-width="1.3" stroke-linecap="round" stroke-linejoin="round"/></svg>
<svg width="22" height="22" viewBox="0 0 22 22" style="left:301px;top:96px"><path d="M1.4 2.6 H8.1 V8.6 M7.8 3 A9.15 9.15 0 1 0 15.9 3.8" fill="none" stroke="#444" stroke-width="1.4" stroke-linecap="butt" stroke-linejoin="miter"/></svg>
<svg width="20" height="22" viewBox="0 0 20 22" style="left:336px;top:96.5px"><path d="M0.7 1.2 H19.3 M2 1.2 V11.6 H18 V1.2 M10 11.6 V19.6 M5 20 H15" fill="none" stroke="#444" stroke-width="1.3" stroke-linecap="round"/><path d="M7.6 3.4 L13 6.3 L7.6 9.3 Z" fill="#2d9f4a"/></svg>
<svg width="20" height="16" viewBox="0 0 20 16" style="left:366px;top:99px"><rect x="0.7" y="0.7" width="18.6" height="14.2" fill="#cfe3f7" stroke="#444" stroke-width="1.3"/><rect x="8" y="2.4" width="9.6" height="10.8" fill="#1b74d0"/></svg>
<svg width="7.6" height="5" viewBox="0 0 7.6 5" style="left:392.80px;top:104.80px"><path d="M1 1 L3.8 4 L6.6 1" fill="none" stroke="#222" stroke-width="1.4" stroke-linecap="round" stroke-linejoin="round"/></svg>
<svg width="20" height="20" viewBox="0 0 20 20" style="left:408px;top:97px"><path d="M10 1.5 L12.4 7 L18.4 7.6 L13.9 11.6 L15.2 17.5 L10 14.4 L4.8 17.5 L6.1 11.6 L1.6 7.6 L7.6 7 Z" fill="none" stroke="#aeacac" stroke-width="1.2" stroke-linejoin="round"/><path d="M17.5 7 L9 17.5 L7.5 19 L8.6 16.4 L16.4 6.2 Z" fill="#d5d3d3" stroke="#aeacac" stroke-width="0.9"/></svg>
<svg width="8" height="5" viewBox="0 0 8 5" style="left:435.00px;top:104.50px"><path d="M1 1 L4.0 4 L7 1" fill="none" stroke="#b5b3b3" stroke-width="1.3" stroke-linecap="round" stroke-linejoin="round"/></svg>
<svg width="20" height="20" viewBox="0 0 20 20" style="left:458px;top:97px"><path d="M6 18.6 H1.2 V1 H9.5 L13 4.6 V7.6 M9.3 1.2 V4.8 H12.8" fill="none" stroke="#444" stroke-width="1.3" stroke-linejoin="round"/><path d="M8.6 9.6 H16.4 V12 M7 16.4 V12.2 H18.4 V16.4 M9 14.6 H16.2 V19 H9 Z" fill="none" stroke="#444" stroke-width="1.3" stroke-linejoin="round"/></svg>
<svg width="10" height="9" viewBox="0 0 10 9" style="left:495.5px;top:103.8px"><path d="M1.2 1 H8.8" stroke="#333" stroke-width="1.3" stroke-linecap="round"/><path d="M1.8 4 L5 7.2 L8.2 4" fill="none" stroke="#333" stroke-width="1.4" stroke-linecap="round" stroke-linejoin="round"/></svg>
<span class="t" style="left:536.00px;top:101.00px;font:14px/14px 'Liberation Sans',sans-serif;color:#333;letter-spacing:-0.360px;">МСК_Тренды_титульник_секция</span>
<span class="t" style="left:743.70px;top:101.00px;font:14px/14px 'Liberation Sans',sans-serif;color:#333;letter-spacing:-0.806px;">(1)</span>
<span class="t" style="left:764.00px;top:101.00px;font:14px/14px 'Liberation Sans',sans-serif;color:#333;letter-spacing:-0.956px;">(3)</span>
<span class="t" style="left:784.60px;top:101.00px;font:14px/14px 'Liberation Sans',sans-serif;color:#333;">•</span>
<span class="t" style="left:796.80px;top:101.00px;font:14px/14px 'Liberation Sans',sans-serif;color:#333;letter-spacing:-0.544px;">Сохранено</span>
<span class="t" style="left:869.50px;top:101.00px;font:14px/14px 'Liberation Sans',sans-serif;color:#333;letter-spacing:0.573px;">в:</span>
<span class="t" style="left:887.40px;top:101.00px;font:14px/14px 'Liberation Sans',sans-serif;color:#333;letter-spacing:-0.428px;">этот</span>
<span class="t" style="left:918.90px;top:101.00px;font:14px/14px 'Liberation Sans',sans-serif;color:#333;letter-spacing:0.264px;">компьютер</span>
<svg width="12.5" height="7.2" viewBox="0 0 12.5 7.2" style="left:997.35px;top:104.80px"><path d="M1 1 L6.25 6.2 L11.5 1" fill="none" stroke="#333" stroke-width="1.3" stroke-linecap="round" stroke-linejoin="round"/></svg>
<svg width="18" height="18" viewBox="0 0 18 18" style="left:1251.5px;top:98px"><circle cx="11" cy="6.6" r="5.2" fill="none" stroke="#444" stroke-width="1.3"/><path d="M7.2 10.4 L1.2 16.6" stroke="#444" stroke-width="1.4" stroke-linecap="round"/></svg>
<div class="a" style="left:1312.6px;top:92.8px;width:29.6px;height:29.6px;border-radius:15px;background:#8c69bd"></div>
<span class="t" style="left:1320.70px;top:102.50px;font:11px/11px 'Liberation Sans',sans-serif;color:#fff;">УК</span>
<div class="a" style="left:1379px;top:106.5px;width:12px;height:1.3px;background:#333;"></div>
<svg width="14" height="14" viewBox="0 0 14 14" style="left:1435px;top:100.5px"><rect x="1" y="3.2" width="9.6" height="9.6" rx="2" fill="none" stroke="#333" stroke-width="1.2"/><path d="M3.6 1 H10.4 Q13 1 13 3.6 V10.2" fill="none" stroke="#333" stroke-width="1.2"/></svg>
<svg width="14" height="14" viewBox="0 0 14 14" style="left:1492.3px;top:100.2px"><path d="M1 1 L13 13 M13 1 L1 13" stroke="#333" stroke-width="1.3" stroke-linecap="round"/></svg>
<span class="t" style="left:17.80px;top:148.00px;font:15px/15px 'Liberation Sans',sans-serif;color:#3a3a3a;letter-spacing:-0.026px;">Файл</span>
<span class="t" style="left:79.70px;top:148.00px;font:bold 15px/15px 'Liberation Sans',sans-serif;color:#222;letter-spacing:0.133px;">Главная</span>
<span class="t" style="left:167.40px;top:148.00px;font:15px/15px 'Liberation Sans',sans-serif;color:#3a3a3a;letter-spacing:-0.326px;">Вставка</span>
<span class="t" style="left:251.30px;top:148.00px;font:15px/15px 'Liberation Sans',sans-serif;color:#3a3a3a;letter-spacing:0.282px;">Рисование</span>
<span class="t" style="left:357.20px;top:148.00px;font:15px/15px 'Liberation Sans',sans-serif;color:#3a3a3a;letter-spacing:0.597px;">Конструктор</span>
<span class="t" style="left:477.80px;top:148.00px;font:15px/15px 'Liberation Sans',sans-serif;color:#3a3a3a;letter-spacing:0.277px;">Переходы</span>
<span class="t" style="left:579.60px;top:148.00px;font:15px/15px 'Liberation Sans',sans-serif;color:#3a3a3a;letter-spacing:0.669px;">Анимация</span>
<span class="t" style="left:682.60px;top:148.00px;font:15px/15px 'Liberation Sans',sans-serif;color:#3a3a3a;letter-spacing:0.380px;">Слайд-шоу</span>
<span class="t" style="left:790.30px;top:148.00px;font:15px/15px 'Liberation Sans',sans-serif;color:#3a3a3a;letter-spacing:0.276px;">Запись</span>
<span class="t" style="left:869.20px;top:148.00px;font:15px/15px 'Liberation Sans',sans-serif;color:#3a3a3a;letter-spacing:0.575px;">Рецензирование</span>
<span class="t" style="left:1019.60px;top:148.00px;font:15px/15px 'Liberation Sans',sans-serif;color:#3a3a3a;letter-spacing:-0.219px;">Вид</span>
<span class="t" style="left:1073.80px;top:148.00px;font:15px/15px 'Liberation Sans',sans-serif;color:#3a3a3a;letter-spacing:0.472px;">Разработчик</span>
<span class="t" style="left:1192.70px;top:148.00px;font:15px/15px 'Liberation Sans',sans-serif;color:#3a3a3a;letter-spacing:0.443px;">Справка</span>
<div class="a" style="left:79.7px;top:165.7px;width:63px;height:2.1px;background:#bd4420;border-radius:1px;"></div>
<div class="a" style="left:1307px;top:139px;width:82px;height:26.5px;border:1px solid #c6c3c2;border-radius:4px;background:#fff"></div>
<svg width="14" height="14" viewBox="0 0 14 14" style="left:1312.3px;top:146.3px"><circle cx="7" cy="7" r="5.9" fill="none" stroke="#333" stroke-width="1.2"/><circle cx="7" cy="7" r="3.3" fill="#222"/></svg>
<span class="t" style="left:1331.40px;top:147.00px;font:15px/15px 'Liberation Sans',sans-serif;color:#222;letter-spacing:0.276px;">Запись</span>
<div class="a" style="left:1400px;top:139px;width:27px;height:26.5px;border:1px solid #c6c3c2;border-radius:4px;background:#fff"></div>
<svg width="16" height="16" viewBox="0 0 16 16" style="left:1406px;top:145.3px"><rect x="1" y="4.2" width="8.6" height="9.6" rx="1.6" fill="#333"/><circle cx="5.3" cy="2.6" r="1.9" fill="none" stroke="#333" stroke-width="1.1"/><circle cx="11.6" cy="3.4" r="1.5" fill="none" stroke="#333" stroke-width="1.1"/><path d="M10.6 6 H14.4 V11 Q14.4 13.4 11.4 13.4 H10.6" fill="none" stroke="#333" stroke-width="1.1"/></svg>
<span class="t" style="left:1409.16px;top:153.00px;font:bold 7px/7px 'Liberation Sans',sans-serif;color:#fff;">T</span>
<div class="a" style="left:1438px;top:139px;width:27.5px;height:26.5px;border:1px solid #c6c3c2;border-radius:4px;background:#fff"></div>
<svg width="16" height="16" viewBox="0 0 16 16" style="left:1444px;top:145.3px"><path d="M2 2 H14 V10.6 H6.6 L3.6 13.4 V10.6 H2 Z" fill="none" stroke="#333" stroke-width="1.2" stroke-linejoin="round"/></svg>
<div class="a" style="left:1476px;top:139px;width:37.5px;height:28.5px;border-radius:4px;background:#d3501f"></div>
<svg width="16" height="16" viewBox="0 0 16 16" style="left:1480.5px;top:145.3px"><path d="M6.4 3.4 H3 Q2 3.4 2 4.4 V12.6 Q2 13.6 3 13.6 H11.4 Q12.4 13.6 12.4 12.6 V11" fill="none" stroke="#fff" stroke-width="1.3" stroke-linecap="round"/><path d="M10 1.6 L14.4 5.6 L10 9.4 V7.2 Q6.6 7 5 10.4 Q5.2 4.4 10 4 Z" fill="none" stroke="#fff" stroke-width="1.2" stroke-linejoin="round"/></svg>
<svg width="8" height="5" viewBox="0 0 8 5" style="left:1500.80px;top:152.00px"><path d="M1 1 L4.0 4 L7 1" fill="none" stroke="#fff" stroke-width="1.3" stroke-linecap="round" stroke-linejoin="round"/></svg>
<div class="a" style="left:9.5px;top:171.7px;width:1508.5px;height:119.8px;border-radius:8px;background:#fff;box-shadow:0 1px 3px rgba(0,0,0,.10)"></div>
<div class="a" style="left:153.1px;top:178px;width:1px;height:105px;background:#dedcdb;"></div>
<div class="a" style="left:281.1px;top:178px;width:1px;height:105px;background:#dedcdb;"></div>
<div class="a" style="left:543.9px;top:178px;width:1px;height:105px;background:#dedcdb;"></div>
<div class="a" style="left:761.7px;top:178px;width:1px;height:105px;background:#dedcdb;"></div>
<div class="a" style="left:1063.7px;top:178px;width:1px;height:105px;background:#dedcdb;"></div>
<div class="a" style="left:1192.1px;top:178px;width:1px;height:105px;background:#dedcdb;"></div>
<div class="a" style="left:1282.9px;top:178px;width:1px;height:105px;background:#dedcdb;"></div>
<div class="a" style="left:1386.1px;top:178px;width:1px;height:105px;background:#dedcdb;"></div>
<div class="a" style="left:1467.3px;top:178px;width:1px;height:105px;background:#dedcdb;"></div>
<span class="t" style="left:33.10px;top:274.00px;font:12px/12px 'Liberation Sans',sans-serif;color:#444;letter-spacing:-0.058px;">Буфер обмена</span>
<span class="t" style="left:195.30px;top:274.00px;font:12px/12px 'Liberation Sans',sans-serif;color:#444;letter-spacing:-0.315px;">Слайды</span>
<span class="t" style="left:383.50px;top:274.00px;font:12px/12px 'Liberation Sans',sans-serif;color:#444;letter-spacing:0.030px;">Шрифт</span>
<span class="t" style="left:626.00px;top:274.00px;font:12px/12px 'Liberation Sans',sans-serif;color:#444;letter-spacing:0.084px;">Абзац</span>
<span class="t" style="left:873.60px;top:274.00px;font:12px/12px 'Liberation Sans',sans-serif;color:#444;letter-spacing:-0.079px;">Рисование</span>
<span class="t" style="left:1221.00px;top:274.00px;font:12px/12px 'Liberation Sans',sans-serif;color:#444;letter-spacing:0.221px;">Голос</span>
<span class="t" style="left:1300.70px;top:274.00px;font:12px/12px 'Liberation Sans',sans-serif;color:#444;letter-spacing:0.229px;">Надстройки</span>
<svg width="10" height="10" viewBox="0 0 10 10" style="left:140px;top:274.5px"><path d="M1 9.2 V1 H9.2 M3.8 3.8 L9 9 M9.2 5.2 V9.2 H5.2" fill="none" stroke="#444" stroke-width="1"/></svg>
<svg width="10" height="10" viewBox="0 0 10 10" style="left:531px;top:274.5px"><path d="M1 9.2 V1 H9.2 M3.8 3.8 L9 9 M9.2 5.2 V9.2 H5.2" fill="none" stroke="#b0aeae" stroke-width="1"/></svg>
<svg width="10" height="10" viewBox="0 0 10 10" style="left:748.3px;top:274.5px"><path d="M1 9.2 V1 H9.2 M3.8 3.8 L9 9 M9.2 5.2 V9.2 H5.2" fill="none" stroke="#b0aeae" stroke-width="1"/></svg>
<svg width="10" height="10" viewBox="0 0 10 10" style="left:1050.3px;top:274.5px"><path d="M1 9.2 V1 H9.2 M3.8 3.8 L9 9 M9.2 5.2 V9.2 H5.2" fill="none" stroke="#b0aeae" stroke-width="1"/></svg>
<svg width="13" height="7.5" viewBox="0 0 13 7.5" style="left:1494.50px;top:271.25px"><path d="M1 1 L6.5 6.5 L12 1" fill="none" stroke="#333" stroke-width="1.4" stroke-linecap="round" stroke-linejoin="round"/></svg>
<svg width="36" height="38" viewBox="0 0 36 38" style="left:40px;top:181px"><path d="M2.1 6.5 H26.6 V33.6 H2.1 Z" fill="#fffaf2" stroke="#e8882b" stroke-width="1.4"/><path d="M3.7 8.1 H25 V32 H3.7 Z" fill="none" stroke="#ffdc98" stroke-width="1.8"/><path d="M7.6 9.6 V5.6 H11 Q11.2 1.4 14.4 1.4 Q17.6 1.4 17.8 5.6 H21.2 V9.6 Z" fill="#fff" stroke="#777" stroke-width="1.2"/><rect x="17.3" y="16.3" width="16" height="20.2" fill="#fff" stroke="#444" stroke-width="1.4"/></svg>
<span class="t" style="left:27.50px;top:225.85px;font:13.3px/13.3px 'Liberation Sans',sans-serif;color:#333;letter-spacing:-0.211px;">Вставить</span>
<svg width="7.4" height="4.9" viewBox="0 0 7.4 4.9" style="left:50.50px;top:248.05px"><path d="M1 1 L3.7 3.9 L6.4 1" fill="none" stroke="#333" stroke-width="1.3" stroke-linecap="round" stroke-linejoin="round"/></svg>
<svg width="18" height="22" viewBox="0 0 18 22" style="left:94px;top:180px"><path d="M5 2 L11.6 15.4 M13 2 L6.4 15.4" stroke="#a5a3a3" stroke-width="1.1" fill="none" stroke-linecap="round"/><circle cx="5.4" cy="17.6" r="2.2" fill="none" stroke="#a5a3a3" stroke-width="1.1"/><circle cx="12.6" cy="17.6" r="2.2" fill="none" stroke="#a5a3a3" stroke-width="1.1"/></svg>
<svg width="22" height="21" viewBox="0 0 22 21" style="left:92px;top:212px"><path d="M8.6 15.8 H1.5 V1.3 H8.6 L10.8 3.4 V5" fill="#ececec" stroke="#a3a1a1" stroke-width="1.2"/><path d="M8.4 4.8 H15 L19.6 9.4 V19.6 H8.4 Z" fill="#f1f0f0" stroke="#9f9d9d" stroke-width="1.2"/><path d="M14.8 5 V9.6 H19.4 M11 13 H17 M11 15.4 H17" fill="none" stroke="#aaa8a8" stroke-width="0.9"/></svg>
<svg width="8" height="5" viewBox="0 0 8 5" style="left:126.60px;top:220.00px"><path d="M1 1 L4.0 4 L7 1" fill="none" stroke="#a9a7a7" stroke-width="1.2" stroke-linecap="round" stroke-linejoin="round"/></svg>
<svg width="20" height="20" viewBox="0 0 20 20" style="left:93px;top:243px"><path d="M12.6 6 L17.4 1.4 Q18.6 0.8 19 2.2 L14.6 7.6 Z" fill="#d9d7d7" stroke="#a5a3a3" stroke-width="0.9"/><path d="M8.8 4.8 L16 11 L14.4 12.8 L7.2 6.6 Z" fill="#eceaea" stroke="#a5a3a3" stroke-width="0.9"/><path d="M7 7.4 L13.6 13.2 L9.6 18.4 L1.6 11.4 Z" fill="#e2e0e0" stroke="#a5a3a3" stroke-width="0.9"/><path d="M5 11.2 L11.4 16 L9.6 18.4 L1.6 11.4 Z" fill="#c4c2c2"/></svg>
<svg width="40" height="36" viewBox="0 0 40 36" style="left:172px;top:178px"><rect x="4.6" y="8.4" width="32" height="25.4" fill="#fff" stroke="#666" stroke-width="1.3"/><rect x="7.2" y="11" width="26.8" height="20.2" fill="none" stroke="#888" stroke-width="0.9"/><path d="M7.2 17 H34 M20.4 17 V31" stroke="#888" stroke-width="0.9"/><rect x="2" y="3" width="16" height="13" fill="#fff" stroke="none"/><path d="M4.6 16 V8.4 M20 8.4 H36.6" stroke="#666" stroke-width="1.3"/><path d="M10.4 2.2 V19.6 M1.6 10.8 H19.4" stroke="#2c9a55" stroke-width="1.7"/></svg>
<span class="t" style="left:167.60px;top:223.85px;font:13.3px/13.3px 'Liberation Sans',sans-serif;color:#333;letter-spacing:0.009px;">Создать</span>
<span class="t" style="left:168.00px;top:243.85px;font:13.3px/13.3px 'Liberation Sans',sans-serif;color:#333;letter-spacing:-0.399px;">слайд</span>
<svg width="7.4" height="4.9" viewBox="0 0 7.4 4.9" style="left:208.90px;top:247.15px"><path d="M1 1 L3.7 3.9 L6.4 1" fill="none" stroke="#333" stroke-width="1.3" stroke-linecap="round" stroke-linejoin="round"/></svg>
<svg width="22" height="17" viewBox="0 0 22 17" style="left:228px;top:182px"><rect x="1.4" y="1.2" width="18.6" height="14.4" fill="#eceaea" stroke="#444" stroke-width="1.4"/><path d="M3.8 6 H17.6 M10.7 6 V13.2 M3.8 3.6 H17.6 V13.2 H3.8 Z" fill="none" stroke="#666" stroke-width="0.9"/></svg>
<svg width="7.4" height="4.9" viewBox="0 0 7.4 4.9" style="left:254.90px;top:189.05px"><path d="M1 1 L3.7 3.9 L6.4 1" fill="none" stroke="#222" stroke-width="1.35" stroke-linecap="round" stroke-linejoin="round"/></svg>
<svg width="22" height="19" viewBox="0 0 22 19" style="left:228px;top:211px"><rect x="2" y="4.6" width="17.8" height="13" fill="#f2f1f1" stroke="#555" stroke-width="1.3"/><path d="M4.6 14.8 V8 M10.6 7.4 H17.4 V14.8 H6" fill="none" stroke="#777" stroke-width="0.9"/><rect x="0" y="0" width="11" height="8.6" fill="#fff"/><path d="M2 5.4 C5.2 3 9 4.4 9.4 8.6 M1.4 5.6 L4.6 2 M1.4 5.6 L5.8 6.8" fill="none" stroke="#2b88d8" stroke-width="1.3" stroke-linecap="round"/></svg>
<svg width="22" height="22" viewBox="0 0 22 22" style="left:228px;top:242px"><rect x="1.4" y="2" width="18.4" height="2.8" fill="#8fd3a6" stroke="#3aa35f" stroke-width="0.7"/><rect x="1.6" y="7" width="18" height="13.6" fill="#eceaea" stroke="#444" stroke-width="1.4"/><rect x="4.2" y="10" width="12.8" height="8" fill="#fff" stroke="#666" stroke-width="0.9"/></svg>
<svg width="7.4" height="4.9" viewBox="0 0 7.4 4.9" style="left:254.90px;top:251.35px"><path d="M1 1 L3.7 3.9 L6.4 1" fill="none" stroke="#222" stroke-width="1.35" stroke-linecap="round" stroke-linejoin="round"/></svg>
<div class="a" style="left:291.3px;top:177.3px;width:186.7px;height:28px;border-radius:4px;background:#f1efef"></div>
<div class="a" style="left:481.3px;top:177.3px;width:54.4px;height:28px;border-radius:4px;background:#f1efef"></div>
<svg width="8" height="5" viewBox="0 0 8 5" style="left:467.20px;top:189.00px"><path d="M1 1 L4.0 4 L7 1" fill="none" stroke="#b5b3b3" stroke-width="1.1" stroke-linecap="round" stroke-linejoin="round"/></svg>
<svg width="8" height="5" viewBox="0 0 8 5" style="left:524.50px;top:189.00px"><path d="M1 1 L4.0 4 L7 1" fill="none" stroke="#b5b3b3" stroke-width="1.1" stroke-linecap="round" stroke-linejoin="round"/></svg>
<span class="t" style="left:483.70px;top:185.00px;font:14px/14px 'Liberation Sans',sans-serif;color:#bcbaba;letter-spacing:-0.273px;">28</span>
<span class="t" style="left:297.50px;top:212.90px;font:bold 16.2px/16.2px 'Liberation Sans',sans-serif;color:#8f8d8d;">Ж</span>
<span class="t" style="left:330.80px;top:212.75px;font:italic 16.5px/16.5px 'Liberation Sans',sans-serif;color:#8f8d8d;">К</span>
<span class="t" style="left:362.50px;top:213.50px;font:16px/16px 'Liberation Sans',sans-serif;color:#8f8d8d;">Ч</span>
<div class="a" style="left:362.4px;top:228.6px;width:10.8px;height:1.1px;background:#8f8d8d;"></div>
<span class="t" style="left:393.30px;top:214.50px;font:16px/16px 'Liberation Sans',sans-serif;color:#8f8d8d;text-shadow:0.7px 0.7px 0 #d0cece;">S</span>
<span class="t" style="left:421.60px;top:215.75px;font:13.5px/13.5px 'Liberation Sans',sans-serif;color:#8f8d8d;letter-spacing:-1.017px;">ab</span>
<div class="a" style="left:420.3px;top:222.6px;width:18.4px;height:1px;background:#8f8d8d;"></div>
<span class="t" style="left:451.60px;top:211.00px;font:15px/15px 'Liberation Sans',sans-serif;color:#8f8d8d;letter-spacing:-0.298px;">AV</span>
<svg width="20" height="7" viewBox="0 0 20 7" style="left:451px;top:224px"><path d="M1.4 3.4 H8.4 M3.6 1.2 L1.2 3.4 L3.6 5.6 M11.4 3.4 H18.4 M16.2 1.2 L18.6 3.4 L16.2 5.6" fill="none" stroke="#8f8d8d" stroke-width="0.9"/></svg>
<svg width="8" height="5" viewBox="0 0 8 5" style="left:477.00px;top:219.80px"><path d="M1 1 L4.0 4 L7 1" fill="none" stroke="#a9a7a7" stroke-width="1.1" stroke-linecap="round" stroke-linejoin="round"/></svg>
<svg width="21" height="21" viewBox="0 0 21 21" style="left:295px;top:243px"><path d="M12.2 1.6 Q13.4 0.6 14.6 1.8 L16.6 3.8 Q17.6 5 16.4 6.2 L9.4 12.6 L5.6 9 Z M5.6 9 L4 12.6 L5.8 14.2 L9.4 12.6 M4 12.6 L2 14.6 H5.4" fill="none" stroke="#8f8d8d" stroke-width="1.05" stroke-linejoin="round"/><rect x="1" y="15.2" width="18.8" height="4.4" fill="#b1afaf"/></svg>
<svg width="8" height="5" viewBox="0 0 8 5" style="left:324.00px;top:251.00px"><path d="M1 1 L4.0 4 L7 1" fill="none" stroke="#a9a7a7" stroke-width="1.1" stroke-linecap="round" stroke-linejoin="round"/></svg>
<span class="t" style="left:348.46px;top:242.25px;font:17.5px/17.5px 'Liberation Sans',sans-serif;color:#8f8d8d;">A</span>
<div class="a" style="left:345px;top:258.2px;width:18.8px;height:4.4px;background:#b1afaf;"></div>
<svg width="8" height="5" viewBox="0 0 8 5" style="left:372.50px;top:251.00px"><path d="M1 1 L4.0 4 L7 1" fill="none" stroke="#a9a7a7" stroke-width="1.1" stroke-linecap="round" stroke-linejoin="round"/></svg>
<span class="t" style="left:394.00px;top:245.00px;font:17px/17px 'Liberation Sans',sans-serif;color:#8f8d8d;letter-spacing:-1.494px;">Aa</span>
<svg width="8" height="5" viewBox="0 0 8 5" style="left:418.70px;top:251.00px"><path d="M1 1 L4.0 4 L7 1" fill="none" stroke="#a9a7a7" stroke-width="1.1" stroke-linecap="round" stroke-linejoin="round"/></svg>
<div class="a" style="left:438.4px;top:239.5px;width:1px;height:27.5px;background:#dedcdb;"></div>
<div class="a" style="left:504px;top:239.5px;width:1px;height:27.5px;background:#dedcdb;"></div>
<span class="t" style="left:447.60px;top:242.00px;font:20px/20px 'Liberation Sans',sans-serif;color:#8f8d8d;">A</span>
<svg width="7" height="5" viewBox="0 0 7 5" style="left:460px;top:245px"><path d="M1 4 L3.5 1.2 L6 4" fill="none" stroke="#8f8d8d" stroke-width="1"/></svg>
<span class="t" style="left:480.60px;top:244.75px;font:16.5px/16.5px 'Liberation Sans',sans-serif;color:#8f8d8d;">A</span>
<svg width="7" height="5" viewBox="0 0 7 5" style="left:490.5px;top:245.5px"><path d="M1 1.2 L3.5 4 L6 1.2" fill="none" stroke="#8f8d8d" stroke-width="1"/></svg>
<span class="t" style="left:511.80px;top:243.00px;font:19px/19px 'Liberation Sans',sans-serif;color:#8f8d8d;">A</span>
<svg width="13" height="12" viewBox="0 0 13 12" style="left:518.6px;top:251.2px"><path d="M7 1.2 L11.6 5 L6.4 10.6 L1.8 6.8 Z" fill="#f1efef" stroke="#8f8d8d" stroke-width="1"/><path d="M4.2 4.2 L8.8 8" stroke="#8f8d8d" stroke-width="0.9"/></svg>
<svg width="21" height="20" viewBox="0 0 21 20" style="left:558px;top:181px"><path d="M7.6 3.4 H19 M7.6 10 H19 M7.6 16.6 H19" stroke="#9a9898" stroke-width="1.1"/><rect x="1.2" y="2.2" width="2.6" height="2.6" fill="#9a9898"/><rect x="1.2" y="8.8" width="2.6" height="2.6" fill="#9a9898"/><rect x="1.2" y="15.4" width="2.6" height="2.6" fill="#9a9898"/></svg>
<svg width="8" height="5" viewBox="0 0 8 5" style="left:587.40px;top:189.00px"><path d="M1 1 L4.0 4 L7 1" fill="none" stroke="#a9a7a7" stroke-width="1.1" stroke-linecap="round" stroke-linejoin="round"/></svg>
<svg width="21" height="20" viewBox="0 0 21 20" style="left:607px;top:181px"><path d="M7.6 3.4 H19 M7.6 10 H19 M7.6 16.6 H19" stroke="#9a9898" stroke-width="1.1"/></svg>
<span class="t" style="left:608.30px;top:181.25px;font:6.5px/6.5px 'Liberation Sans',sans-serif;color:#9a9898;">1</span>
<span class="t" style="left:608.30px;top:188.25px;font:6.5px/6.5px 'Liberation Sans',sans-serif;color:#9a9898;">2</span>
<span class="t" style="left:608.30px;top:195.25px;font:6.5px/6.5px 'Liberation Sans',sans-serif;color:#9a9898;">3</span>
<svg width="8" height="5" viewBox="0 0 8 5" style="left:636.00px;top:189.00px"><path d="M1 1 L4.0 4 L7 1" fill="none" stroke="#a9a7a7" stroke-width="1.1" stroke-linecap="round" stroke-linejoin="round"/></svg>
<div class="a" style="left:652px;top:177px;width:1px;height:28px;background:#dedcdb;"></div>
<svg width="21" height="20" viewBox="0 0 21 20" style="left:659px;top:181px"><path d="M8.6 3 H20 M8.6 7.6 H20 M8.6 12.2 H20 M8.6 16.8 H20" stroke="#9a9898" stroke-width="1.1"/><path d="M3.4 2.4 V7.6 M1.2 4.6 L3.4 2.2 L5.6 4.6 M3.4 12.4 V17.6 M1.2 15.4 L3.4 17.8 L5.6 15.4" fill="none" stroke="#9a9898" stroke-width="1"/></svg>
<svg width="8" height="5" viewBox="0 0 8 5" style="left:685.00px;top:189.00px"><path d="M1 1 L4.0 4 L7 1" fill="none" stroke="#a9a7a7" stroke-width="1.1" stroke-linecap="round" stroke-linejoin="round"/></svg>
<svg width="18" height="22" viewBox="0 0 18 22" style="left:711px;top:180px"><path d="M3.6 1.6 V19.6 M1 17 L3.6 19.8 L6.2 17 M12.6 12 V19.6 M10 17 L12.6 19.8 L15.2 17" fill="none" stroke="#9a9898" stroke-width="1.05"/></svg>
<span class="t" style="left:718.60px;top:180.75px;font:10.5px/10.5px 'Liberation Sans',sans-serif;color:#9a9898;">A</span>
<svg width="8" height="5" viewBox="0 0 8 5" style="left:735.30px;top:189.00px"><path d="M1 1 L4.0 4 L7 1" fill="none" stroke="#a9a7a7" stroke-width="1.1" stroke-linecap="round" stroke-linejoin="round"/></svg>
<svg width="20" height="20" viewBox="0 0 20 20" style="left:559px;top:212px"><path d="M1.4 2.2 H18.6 M10 7.4 H18.6 M10 12.6 H18.6 M1.4 17.8 H18.6 M1.6 10 H7.6 M3.8 7.6 L1.4 10 L3.8 12.4" fill="none" stroke="#9a9898" stroke-width="1.1"/></svg>
<svg width="20" height="20" viewBox="0 0 20 20" style="left:590.4px;top:212px"><path d="M1.4 2.2 H18.6 M10 7.4 H18.6 M10 12.6 H18.6 M1.4 17.8 H18.6 M1.4 10 H7.4 M5.2 7.6 L7.6 10 L5.2 12.4" fill="none" stroke="#9a9898" stroke-width="1.1"/></svg>
<div class="a" style="left:617px;top:208.8px;width:1px;height:27.5px;background:#dedcdb;"></div>
<svg width="17" height="12" viewBox="0 0 17 12" style="left:626px;top:216px"><path d="M1 1.6 H7 M9.6 1.6 H15.6 M1 5.8 H7 M9.6 5.8 H15.6 M1 10 H7 M9.6 10 H15.6" stroke="#c2c0c0" stroke-width="1.1"/></svg>
<svg width="8" height="5" viewBox="0 0 8 5" style="left:650.30px;top:220.00px"><path d="M1 1 L4.0 4 L7 1" fill="none" stroke="#a9a7a7" stroke-width="1.1" stroke-linecap="round" stroke-linejoin="round"/></svg>
<svg width="21" height="22" viewBox="0 0 21 22" style="left:709px;top:211px"><rect x="1.6" y="6.8" width="17.4" height="10.6" fill="#eeecec"/><path d="M4 6.6 H1.4 V17.4 H4 M16.4 6.6 H19 V17.4 H16.4 M5.6 12 H14.8 M10.2 3 V9.2 M8 5 L10.2 2.8 L12.4 5 M10.2 14.6 V20 M8 18 L10.2 20.2 L12.4 18" fill="none" stroke="#9a9898" stroke-width="1.05"/></svg>
<svg width="8" height="5" viewBox="0 0 8 5" style="left:735.30px;top:220.00px"><path d="M1 1 L4.0 4 L7 1" fill="none" stroke="#a9a7a7" stroke-width="1.1" stroke-linecap="round" stroke-linejoin="round"/></svg>
<svg width="20" height="20" viewBox="0 0 20 20" style="left:559px;top:242.4px"><path d="M1.4 2.6 H18.4 M1.4 7.6 H12 M1.4 12.6 H18.4 M1.4 17.6 H12" stroke="#9a9898" stroke-width="1.1" fill="none"/></svg>
<svg width="20" height="20" viewBox="0 0 20 20" style="left:589.9px;top:242.4px"><path d="M1.4 2.6 H18.4 M4.4 7.6 H15.4 M1.4 12.6 H18.4 M4.4 17.6 H15.4" stroke="#9a9898" stroke-width="1.1" fill="none"/></svg>
<svg width="20" height="20" viewBox="0 0 20 20" style="left:621.4px;top:242.4px"><path d="M1.4 2.6 H18.4 M7.8 7.6 H18.4 M1.4 12.6 H18.4 M7.8 17.6 H18.4" stroke="#9a9898" stroke-width="1.1" fill="none"/></svg>
<svg width="20" height="20" viewBox="0 0 20 20" style="left:652.4px;top:242.4px"><path d="M1.4 2.6 H18.4 M1.4 7.6 H18.4 M1.4 12.6 H18.4 M1.4 17.6 H18.4" stroke="#9a9898" stroke-width="1.1" fill="none"/></svg>
<svg width="21" height="18" viewBox="0 0 21 18" style="left:709px;top:244px"><path d="M1.4 1.2 H12.6 L17.6 5.4 H5.6 Z" fill="#c9c7c7" stroke="#9a9898" stroke-width="0.9"/><path d="M1.8 10.4 L5.8 6.8 M1.6 10.6 H6.8" stroke="#9a9898" stroke-width="0.9" fill="none"/><rect x="8.2" y="8" width="11" height="8.4" fill="#f4f3f3" stroke="#9a9898" stroke-width="1.1"/><path d="M10 11 H11.4 M12.8 11 H17.4 M10 13.6 H11.4 M12.8 13.6 H17.4" stroke="#9a9898" stroke-width="0.9"/></svg>
<svg width="8" height="5" viewBox="0 0 8 5" style="left:735.30px;top:251.00px"><path d="M1 1 L4.0 4 L7 1" fill="none" stroke="#a9a7a7" stroke-width="1.1" stroke-linecap="round" stroke-linejoin="round"/></svg>
<svg width="36" height="36" viewBox="0 0 36 36" style="left:782px;top:181px"><rect x="1.4" y="1.4" width="22.2" height="22.4" fill="#7db8ee" stroke="#1f75d1" stroke-width="1.4"/><circle cx="22.8" cy="22.7" r="11.4" fill="#fbfafa" stroke="#444" stroke-width="1.4"/></svg>
<span class="t" style="left:775.50px;top:224.85px;font:13.3px/13.3px 'Liberation Sans',sans-serif;color:#333;letter-spacing:0.690px;">Фигуры</span>
<svg width="7.4" height="4.9" viewBox="0 0 7.4 4.9" style="left:795.30px;top:246.45px"><path d="M1 1 L3.7 3.9 L6.4 1" fill="none" stroke="#333" stroke-width="1.3" stroke-linecap="round" stroke-linejoin="round"/></svg>
<svg width="36" height="36" viewBox="0 0 36 36" style="left:859px;top:181px"><rect x="6.6" y="6.6" width="23" height="22.8" fill="#fbd48e" stroke="#e9962e" stroke-width="1.4"/><rect x="1.4" y="1.4" width="14" height="13.6" fill="#f8f7f7" stroke="#555" stroke-width="1.4"/><rect x="20.8" y="20.8" width="14" height="13.6" fill="#f8f7f7" stroke="#555" stroke-width="1.4"/></svg>
<span class="t" style="left:834.40px;top:224.85px;font:13.3px/13.3px 'Liberation Sans',sans-serif;color:#333;letter-spacing:0.565px;">Упорядочить</span>
<svg width="7.4" height="4.9" viewBox="0 0 7.4 4.9" style="left:872.70px;top:246.45px"><path d="M1 1 L3.7 3.9 L6.4 1" fill="none" stroke="#333" stroke-width="1.3" stroke-linecap="round" stroke-linejoin="round"/></svg>
<svg width="38" height="36" viewBox="0 0 38 36" style="left:943px;top:181px"><rect x="1.4" y="1.8" width="32" height="32" rx="1.5" fill="#f1efef" stroke="#c8c6c6" stroke-width="1.3"/><path d="M35.6 13.2 Q37 12.6 36.2 14.4 L24.6 29.4 L21.6 27.2 Z" fill="#d2d0d0" stroke="#b8b6b6" stroke-width="0.8"/><path d="M21.6 27 L24.8 29.6 Q22 35.4 10.6 35 Q17 32.6 17.6 29.2 Q18.6 26.4 21.6 27 Z" fill="#cfcdcd"/></svg>
<span class="t" style="left:929.30px;top:224.85px;font:13.3px/13.3px 'Liberation Sans',sans-serif;color:#b7b5b5;letter-spacing:0.100px;">Экспресс-</span>
<span class="t" style="left:937.00px;top:243.85px;font:13.3px/13.3px 'Liberation Sans',sans-serif;color:#b7b5b5;letter-spacing:-0.265px;">стили</span>
<svg width="8" height="5.2" viewBox="0 0 8 5.2" style="left:975.80px;top:247.20px"><path d="M1 1 L4.0 4.2 L7 1" fill="none" stroke="#c2c0c0" stroke-width="1.2" stroke-linecap="round" stroke-linejoin="round"/></svg>
<svg width="21" height="21" viewBox="0 0 21 21" style="left:1003px;top:181px"><path d="M4.6 8.6 L11 2.4 L17 8.4 L10.6 14.6 Z" fill="#efeded" stroke="#9a9898" stroke-width="1"/><path d="M11 2.4 C11.4 -0.4 15.6 0.4 15 4.4 M17.4 7.6 Q19.6 10.6 18 12.4 Q16.4 10.8 17.4 7.6" fill="none" stroke="#9a9898" stroke-width="1"/><rect x="0.8" y="15.2" width="18.8" height="4.6" fill="#b9b7b7"/></svg>
<svg width="8" height="5" viewBox="0 0 8 5" style="left:1037.20px;top:189.00px"><path d="M1 1 L4.0 4 L7 1" fill="none" stroke="#a9a7a7" stroke-width="1.1" stroke-linecap="round" stroke-linejoin="round"/></svg>
<svg width="21" height="21" viewBox="0 0 21 21" style="left:1003px;top:212px"><path d="M9.4 2.6 H2 V13.6 H6" fill="none" stroke="#9a9898" stroke-width="1"/><path d="M15.4 1.6 Q16.8 0.6 17.8 1.8 Q19 3 18 4.2 L9.8 12 L6.4 13.4 L7.6 10 Z" fill="#e3e1e1" stroke="#9a9898" stroke-width="1"/><rect x="0.8" y="15.2" width="18.8" height="4.6" fill="#b9b7b7"/></svg>
<svg width="8" height="5" viewBox="0 0 8 5" style="left:1037.20px;top:220.00px"><path d="M1 1 L4.0 4 L7 1" fill="none" stroke="#a9a7a7" stroke-width="1.1" stroke-linecap="round" stroke-linejoin="round"/></svg>
<svg width="20" height="17" viewBox="0 0 20 17" style="left:1003px;top:245px"><path d="M5 1.4 H15.2 L18.8 4.4 V7.6 L15 14.4 H3.8 L1 11.8 V8.4 Z" fill="#c9c7c7" stroke="#9a9898" stroke-width="1" stroke-linejoin="round"/><path d="M5 1.4 H15.2 L18.8 4.4 L15 10.8 H3.8 L1 8.4 Z" fill="#efeded" stroke="#9a9898" stroke-width="0.9" stroke-linejoin="round"/></svg>
<svg width="8" height="5" viewBox="0 0 8 5" style="left:1029.20px;top:251.10px"><path d="M1 1 L4.0 4 L7 1" fill="none" stroke="#a9a7a7" stroke-width="1.1" stroke-linecap="round" stroke-linejoin="round"/></svg>
<svg width="40" height="40" viewBox="0 0 40 40" style="left:1108px;top:178px"><circle cx="24.4" cy="15" r="12.4" fill="#fff" stroke="#444" stroke-width="1.4"/><path d="M15.4 23.8 L3.2 36.2" stroke="#444" stroke-width="1.5" stroke-linecap="round"/></svg>
<span class="t" style="left:1075.60px;top:222.85px;font:13.3px/13.3px 'Liberation Sans',sans-serif;color:#333;letter-spacing:0.368px;">Редактирование</span>
<svg width="7.4" height="4.9" viewBox="0 0 7.4 4.9" style="left:1124.20px;top:244.25px"><path d="M1 1 L3.7 3.9 L6.4 1" fill="none" stroke="#333" stroke-width="1.3" stroke-linecap="round" stroke-linejoin="round"/></svg>
<svg width="26" height="40" viewBox="0 0 26 40" style="left:1225px;top:179px"><rect x="6" y="1.8" width="14.4" height="26" rx="7.2" fill="#62abec" stroke="#2b7fd3" stroke-width="1.3"/><path d="M2 18.4 Q2 33 13.2 33 Q24.4 33 24.4 18.4 M13.2 33 V38.6" fill="none" stroke="#444" stroke-width="1.4" stroke-linecap="round"/></svg>
<span class="t" style="left:1205.60px;top:225.85px;font:13.3px/13.3px 'Liberation Sans',sans-serif;color:#333;letter-spacing:0.510px;">Диктофон</span>
<svg width="7.4" height="4.9" viewBox="0 0 7.4 4.9" style="left:1234.00px;top:247.85px"><path d="M1 1 L3.7 3.9 L6.4 1" fill="none" stroke="#333" stroke-width="1.3" stroke-linecap="round" stroke-linejoin="round"/></svg>
<svg width="36" height="36" viewBox="0 0 36 36" style="left:1317.5px;top:181.3px"><rect x="1" y="1" width="33.4" height="33.4" fill="#fff" stroke="#e8692d" stroke-width="1.6"/><rect x="4.8" y="4.8" width="11" height="11" fill="#fff" stroke="#e8692d" stroke-width="1.2"/><rect x="19.6" y="4.8" width="11" height="11" fill="#fff" stroke="#e8692d" stroke-width="1.2"/><rect x="4.8" y="19.6" width="11" height="11" fill="#fff" stroke="#e8692d" stroke-width="1.2"/><rect x="19.6" y="19.6" width="11" height="11" fill="#fff" stroke="#e8692d" stroke-width="1.2"/></svg>
<span class="t" style="left:1297.00px;top:224.85px;font:13.3px/13.3px 'Liberation Sans',sans-serif;color:#333;letter-spacing:0.525px;">Надстройки</span>
<svg width="42" height="38" viewBox="0 0 42 38" style="left:1406px;top:178px"><rect x="5.6" y="8.4" width="33" height="25.6" fill="#fff" stroke="#555" stroke-width="1.3"/><rect x="8.2" y="11" width="27.8" height="20.4" fill="none" stroke="#777" stroke-width="0.9"/><path d="M8.2 17.6 H36 M29 17.6 V31.4" stroke="#777" stroke-width="0.9"/><path d="M9.4 1.6 H17.6 L13.4 10 H18.4 L3.4 25.4 L7.8 14.6 H3.6 Z" fill="#f9b33f" stroke="#e8862a" stroke-width="0.9" stroke-linejoin="round"/></svg>
<span class="t" style="left:1400.70px;top:224.85px;font:13.3px/13.3px 'Liberation Sans',sans-serif;color:#333;letter-spacing:0.225px;">Designer</span>
<div class="a" style="left:1507px;top:291px;width:21px;height:458px;background:#f6f4f4;"></div>
<svg width="12" height="8" viewBox="0 0 12 8" style="left:1511.5px;top:297.5px"><path d="M6,0.5 L11.3,6.2 Q11.8,7.5 10.6,7.5 L1.4,7.5 Q0.2,7.5 0.7,6.2 Z" fill="#757575"/></svg>
<div class="a" style="left:1513px;top:350px;width:9px;height:34px;background:#757575;border-radius:5px;"></div>
<svg width="12" height="8" viewBox="0 0 12 8" style="left:1511.5px;top:737px"><path d="M6,7.5 L11.3,1.8 Q11.8,0.5 10.6,0.5 L1.4,0.5 Q0.2,0.5 0.7,1.8 Z" fill="#757575"/></svg>
<svg width="14" height="16" viewBox="0 0 14 16" style="left:1510.5px;top:754px"><path d="M7 0.6 L12.6 7 H1.4 Z M7 7.6 L12.6 14 H1.4 Z" fill="#757575" stroke="#757575" stroke-width="1" stroke-linejoin="round"/></svg>
<svg width="14" height="16" viewBox="0 0 14 16" style="left:1510.5px;top:773px"><path d="M7 15.4 L12.6 9 H1.4 Z M7 8.4 L12.6 2 H1.4 Z" fill="#757575" stroke="#757575" stroke-width="1" stroke-linejoin="round"/></svg>
<div class="a" style="left:1422px;top:728px;width:56px;height:56px;border-radius:28px;background:#fff;box-shadow:0 2px 7px rgba(120,60,140,.22),0 0 2px rgba(0,0,0,.10)"></div>
<svg width="30" height="28" viewBox="0 0 30 28" style="left:1435px;top:742px"><defs><linearGradient id="cpa" x1="0" y1="0" x2="0" y2="1"><stop offset="0" stop-color="#1583ea"/><stop offset="0.35" stop-color="#1f9ad0"/><stop offset="0.62" stop-color="#5db868"/><stop offset="1" stop-color="#f5c41c"/></linearGradient><linearGradient id="cpb" x1="0" y1="0" x2="0" y2="1"><stop offset="0" stop-color="#a45cf0"/><stop offset="0.45" stop-color="#f066a4"/><stop offset="1" stop-color="#ff9d4a"/></linearGradient><linearGradient id="cpc" x1="0" y1="0" x2="0" y2="1"><stop offset="0" stop-color="#f58a3a"/><stop offset="1" stop-color="#e2502a"/></linearGradient></defs><path d="M7 19.4 H14.6 L12.8 25.6 Q12.4 26.8 11.4 26.8 Q9.6 26.8 8.8 24.6 Z" fill="url(#cpc)"/><path d="M6 0.5 H17 Q20.5 0.5 21.6 3.6 L23.4 9 H19.8 Q18 9 17.5 10.6 L14.7 19.6 H3.2 Q0 19.6 0.7 16.4 L3.6 2.6 Q4.2 0.5 6 0.5 Z" fill="url(#cpa)"/><path d="M14.4 0.5 H17 Q20.5 0.5 21.6 3.6 L23.4 9 H19.4 L17.6 3.4 Q16.8 0.9 14.4 0.5 Z" fill="#1c5bd6"/><path d="M20.8 9.2 H27 Q30 9.2 29.2 12.2 L26 24.6 Q25.4 26.8 23.2 26.8 H11.8 Q13.2 26.6 13.8 24.6 L17.8 11.2 Q18.4 9.2 20.8 9.2 Z" fill="url(#cpb)"/><path d="M17.2 10.2 L14.2 20 L12.8 25 L15 22.8 L18.4 11.4 Z" fill="#fff" opacity="0.9"/></svg>
<svg width="17.6" height="26.4" viewBox="0 0 16 24" style="left:469.1px;top:333.8px"><path d="M1.2 1.4 V18.4 L5.2 14.8 L8.2 21.4 L10.8 20.3 L7.9 13.8 H13.6 Z" fill="#fff" stroke="#3a3a3a" stroke-width="1" stroke-linejoin="round"/></svg>
</div></body></html>
